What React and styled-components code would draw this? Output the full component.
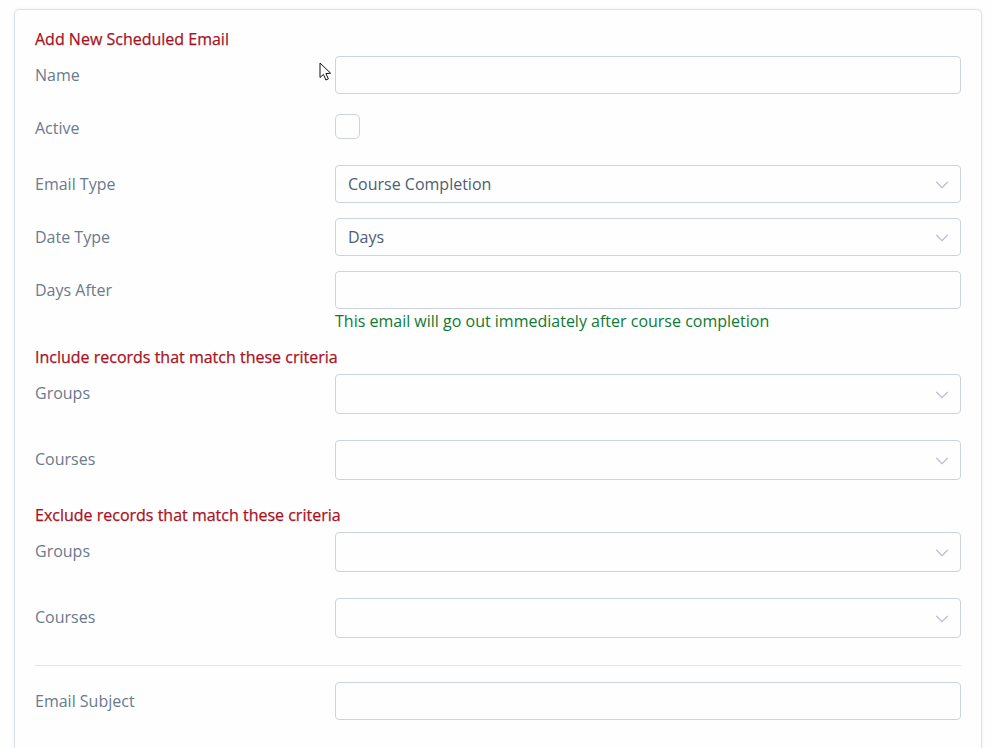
import React from 'react';
import styled, { createGlobalStyle } from 'styled-components';

const GlobalStyle = createGlobalStyle`
  html, body {
    margin: 0;
    height: 748px;
    overflow: hidden;
    background: #fefefe;
  }
`;

const Page = styled.div`
  position: relative;
  height: 748px;
  overflow: hidden;
  padding: 9px 10px 0 14px;
  box-sizing: border-box;
  font-family: "Open Sans", sans-serif;
  font-size: 16px;
`;

const Card = styled.form`
  box-sizing: border-box;
  min-height: 800px;
  padding: 19px 20px 0;
  background: #fefefe;
  border: 1px solid #dde3ec;
  border-radius: 5px;
  box-shadow: 0 0 3px rgba(200, 210, 225, 0.35);
`;

const Heading = styled.h3`
  margin: 0;
  height: 20px;
  font-size: 16px;
  font-weight: 500;
  line-height: 20px;
  color: #a8121f;
  -webkit-text-stroke: 0.25px #a8121f;
  margin-top: ${(props) => props.$top || 0}px;
`;

const Row = styled.div`
  display: grid;
  grid-template-columns: 300px 626px;
  align-items: center;
  margin-top: ${(props) => props.$top || 0}px;
`;

const Label = styled.label`
  color: #6b7a8c;
  line-height: 22px;
  margin-bottom: ${(props) => (props.$raised ? 2 : 0)}px;
`;

const TextInput = styled.input`
  display: block;
  box-sizing: border-box;
  width: 100%;
  height: 38px;
  padding: 0 12px;
  background: #fefefe;
  border: 1px solid #cdd2e3;
  border-radius: 4px;
  outline: none;
`;

const Checkbox = styled.span`
  display: block;
  box-sizing: border-box;
  width: 25px;
  height: 25px;
  margin-top: -3px;
  border: 1px solid #cdd2e3;
  border-radius: 5px;
`;

const Select = styled.div`
  display: flex;
  align-items: center;
  justify-content: space-between;
  box-sizing: border-box;
  height: ${(props) => props.$height || 38}px;
  padding: 0 12px;
  border: 1px solid #cdd2e3;
  border-radius: 4px;
  color: #4f5d73;
`;

const Chevron = styled.svg`
  display: block;
  width: 12px;
  height: 8px;
  margin-top: 1px;
  fill: none;
  stroke: #b4bbd0;
  stroke-width: 1.2;
`;

const Hint = styled.div`
  margin: 1px 0 0 300px;
  line-height: 22px;
  color: #0c7a32;
`;

const Divider = styled.hr`
  margin: 27px 0 16px;
  border: 0;
  border-top: 1px solid #e2e5ec;
`;

const Cursor = styled.svg`
  position: absolute;
  left: 319px;
  top: 62px;
  width: 13px;
  height: 19px;
`;

const Arrow = () => (
  <Chevron viewBox="0 0 12 8">
    <path d="M0.3 1 L6 6.7 L11.7 1" />
  </Chevron>
);

const Dropdown = ({ value, height }) => (
  <Select $height={height}>
    <span>{value}</span>
    <Arrow />
  </Select>
);

export default function App() {
  return (
    <Page>
      <GlobalStyle />
      <Card>
        <Heading>Add New Scheduled Email</Heading>
        <Row $top={7}>
          <Label>Name</Label>
          <TextInput />
        </Row>
        <Row $top={23}>
          <Label>Active</Label>
          <Checkbox />
        </Row>
        <Row $top={26}>
          <Label>Email Type</Label>
          <Dropdown value="Course Completion" />
        </Row>
        <Row $top={15}>
          <Label>Date Type</Label>
          <Dropdown value="Days" />
        </Row>
        <Row $top={15}>
          <Label>Days After</Label>
          <TextInput />
        </Row>
        <Hint>This email will go out immediately after course completion</Hint>
        <Heading $top={15}>Include records that match these criteria</Heading>
        <Row $top={7}>
          <Label $raised>Groups</Label>
          <Dropdown height={40} />
        </Row>
        <Row $top={26}>
          <Label $raised>Courses</Label>
          <Dropdown height={40} />
        </Row>
        <Heading $top={25}>Exclude records that match these criteria</Heading>
        <Row $top={7}>
          <Label $raised>Groups</Label>
          <Dropdown height={40} />
        </Row>
        <Row $top={26}>
          <Label $raised>Courses</Label>
          <Dropdown height={40} />
        </Row>
        <Divider />
        <Row>
          <Label>Email Subject</Label>
          <TextInput />
        </Row>
      </Card>
      <Cursor viewBox="0 0 13 19">
        <path d="M1 1 L1 15.5 L4.4 12.4 L6.9 18 L9.4 16.9 L6.9 11.6 L11.6 11.2 Z" fill="#fff" stroke="#111" strokeWidth="1" />
      </Cursor>
    </Page>
  );
}
